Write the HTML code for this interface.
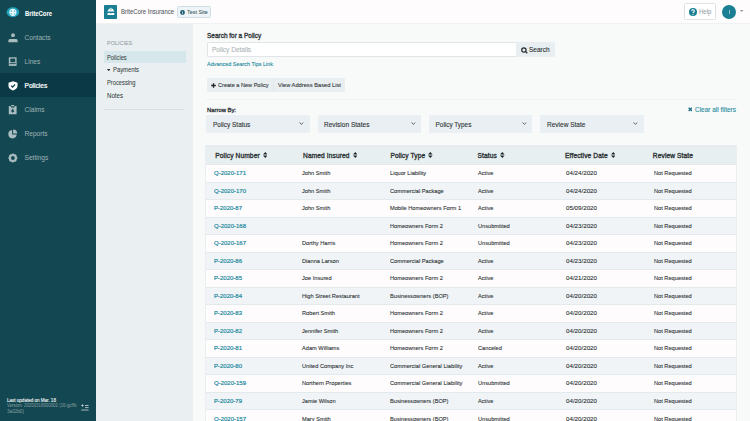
<!DOCTYPE html>
<html><head><meta charset="utf-8">
<style>
*{margin:0;padding:0;box-sizing:border-box}
html,body{width:750px;height:421px;overflow:hidden;background:#f8fafa;font-family:"Liberation Sans",sans-serif;color:#333;position:relative}
.abs{position:absolute}
.t{position:absolute;white-space:nowrap;transform-origin:0 50%}
table{position:absolute;left:206px;top:145.5px;width:530px;border-collapse:collapse;table-layout:fixed;box-shadow:0 0 0 0.7px #e4e9eb}
th{height:18.5px;background:#e8eff1;border-top:1px solid #e1e8eb;text-align:left;font-size:6.6px;font-weight:normal;-webkit-text-stroke:0.32px #2b3133;color:#2b3133;letter-spacing:0.12px;padding-left:9.6px;padding-top:0.5px;white-space:nowrap;}
td{height:17.5px;font-size:6.25px;color:#2c3234;padding-left:8px;padding-top:0px;white-space:nowrap;border-top:0.5px solid #e4e9ec;-webkit-text-stroke:0.1px #2c3234}
tr:nth-child(odd) td{background:#fefcfd}
tr:nth-child(even) td{background:#f0f4f7}
td a{color:#248a9d;text-decoration:none;-webkit-text-stroke:0.2px #248a9d}
td span.n{display:inline-block;transform:scaleX(.905);transform-origin:0 50%}
td span.d{font-size:6.2px}td a{font-size:6.0px}
td>*{position:relative;top:-0.3px}td>a{top:-0.5px}
th:nth-child(1){padding-left:9.3px}th:nth-child(2){padding-left:9px}th:nth-child(3){padding-left:8.4px}th:nth-child(4){padding-left:7.5px}th:nth-child(5){padding-left:7.1px}th:nth-child(6){padding-left:6.8px}
.sort{display:inline-block;margin-left:1.2px;vertical-align:middle;width:4.6px;height:6px;position:relative;top:-0.7px}
</style></head><body>
<div class="abs" style="left:0;top:0;width:96px;height:421px;background:#134751"></div>
<svg class="abs" style="left:5.5px;top:7px" width="14" height="11" viewBox="0 0 14 11">
<ellipse cx="6.9" cy="5.3" rx="6.3" ry="5" fill="#22a3bd"/>
<circle cx="6.9" cy="5.3" r="3.6" fill="#e9fbff"/>
<rect x="4.6" y="3.5" width="1.3" height="1.2" fill="#3aa9bf"/><rect x="7.9" y="3.5" width="1.3" height="1.2" fill="#3aa9bf"/>
<rect x="4.6" y="6.0" width="1.3" height="1.8" fill="#7cc8d6"/><rect x="7.9" y="6.0" width="1.3" height="1.8" fill="#7cc8d6"/>
</svg>
<div class="t" style="left:25.00px;top:9.79px;font-size:6.3px;line-height:7.24px;color:#fff;font-weight:bold;transform:scaleX(0.941);-webkit-text-stroke:0.05px #fff;">BriteCore</div>

<div class="abs" style="left:0;top:73px;width:96px;height:24px;background:#0b3a46"></div>
<svg class="abs" style="left:7.5px;top:32.5px" width="10" height="10" viewBox="0 0 10 10"><rect x="3.2" y="0.5" width="3.6" height="3.4" rx="1.2" fill="#a9bcbf"/><path d="M0.4 9.3V7.6C0.4 6.6 1.4 6.1 2.4 6.1H7.6C8.6 6.1 9.6 6.6 9.6 7.6V9.3z" fill="#a9bcbf"/></svg>
<div class="t" style="left:24.50px;top:33.62px;font-size:6.6px;line-height:7.59px;color:#9cb0b4;-webkit-text-stroke:0.04px #9cb0b4;">Contacts</div>

<svg class="abs" style="left:7.5px;top:56.5px" width="10" height="10" viewBox="0 0 10 10"><rect x="0.8" y="0.3" width="7.8" height="8.6" fill="#a9bcbf"/><rect x="2.4" y="1.6" width="4.8" height="3.6" fill="#134751"/><rect x="1.6" y="6.2" width="6.2" height="0.9" fill="#134751"/></svg>
<div class="t" style="left:24.50px;top:57.62px;font-size:6.6px;line-height:7.59px;color:#9cb0b4;-webkit-text-stroke:0.04px #9cb0b4;">Lines</div>

<svg class="abs" style="left:7.5px;top:80.5px" width="10" height="10" viewBox="0 0 10 10"><path d="M5 0.2L9.5 1.8v3c0 2.4-2 3.9-4.5 4.6C2.5 8.7 0.5 7.2 0.5 4.8V1.8z" fill="#fff"/><path d="M3 4.7l1.5 1.5L7.1 3.5" stroke="#0b3a46" stroke-width="1.1" fill="none"/></svg>
<div class="t" style="left:24.50px;top:81.62px;font-size:6.6px;line-height:7.59px;color:#fff;-webkit-text-stroke:0.22px #fff;">Policies</div>

<svg class="abs" style="left:7.5px;top:104.5px" width="10" height="10" viewBox="0 0 10 10"><path d="M0.8 1H3.2V0H6.2V1H8.6V9.2H0.8z" fill="#a9bcbf"/><path d="M2.3 1.3L3.3 2.4H6.1L7.1 1.3" fill="#134751"/><path d="M4.7 3.7v3.4M3.3 5.6l1.4 1.4 1.4-1.4" stroke="#134751" stroke-width="1.1" fill="none"/></svg>
<div class="t" style="left:24.50px;top:105.62px;font-size:6.6px;line-height:7.59px;color:#9cb0b4;-webkit-text-stroke:0.04px #9cb0b4;">Claims</div>

<svg class="abs" style="left:7.5px;top:128.5px" width="10" height="10" viewBox="0 0 10 10"><path d="M4.1 1A4.2 4.2 0 1 0 8.7 5.6H4.1z" fill="#a9bcbf"/><path d="M5.1 0.4v4.2h4.1A4.2 4.2 0 0 0 5.1 0.4z" fill="#a9bcbf"/></svg>
<div class="t" style="left:24.50px;top:129.62px;font-size:6.6px;line-height:7.59px;color:#9cb0b4;-webkit-text-stroke:0.04px #9cb0b4;">Reports</div>

<svg class="abs" style="left:7.5px;top:152.5px" width="10" height="10" viewBox="0 0 10 10"><circle cx="4.9" cy="5" r="3" fill="none" stroke="#a9bcbf" stroke-width="2.2"/><path d="M4.9 0.5v2M4.9 7.5v2M0.4 5h2M7.4 5h2M1.7 1.8l1.4 1.4M6.7 6.8l1.4 1.4M1.7 8.2l1.4-1.4M6.7 3.2l1.4-1.4" stroke="#a9bcbf" stroke-width="1.5"/></svg>
<div class="t" style="left:24.50px;top:153.62px;font-size:6.6px;line-height:7.59px;color:#9cb0b4;-webkit-text-stroke:0.04px #9cb0b4;">Settings</div>

<div class="t" style="left:7.00px;top:397.87px;font-size:4.9px;line-height:5.63px;color:#e3ebec;transform:scaleX(0.927);-webkit-text-stroke:0.15px #e3ebec;">Last updated on Mar. 18</div>

<div class="t" style="left:7.00px;top:403.34px;font-size:4.6px;line-height:5.29px;color:#7d979c;transform:scaleX(0.950);-webkit-text-stroke:0.05px #7d979c;">Version: 20200318000002 (16-gcffb</div>

<div class="t" style="left:7.00px;top:409.24px;font-size:4.6px;line-height:5.29px;color:#7d979c;transform:scaleX(1.007);-webkit-text-stroke:0.05px #7d979c;">3a02b0)</div>

<svg class="abs" style="left:80.5px;top:403.5px" width="8" height="7" viewBox="0 0 8 7"><path d="M0.3 1.5h2.4M1.5 0.3v2.4" stroke="#cfd9db" stroke-width="0.8"/><path d="M4 1.5h3.6M4 3.6h3.6M0.3 6h7.3" stroke="#cfd9db" stroke-width="0.8"/></svg>
<div class="abs" style="left:96px;top:0;width:654px;height:24px;background:#fefcfd;border-bottom:1px solid #eff2f2"></div>
<div class="abs" style="left:103.7px;top:4.9px;width:13.5px;height:13.7px;background:#1a7f93;border-radius:0.8px"></div>
<svg class="abs" style="left:105.5px;top:7px" width="10" height="10" viewBox="0 0 10 10"><path d="M1.5 4.6L3 1.7H6.8L8.3 4.6z" fill="#fff"/><rect x="4.4" y="0.8" width="1" height="1.2" fill="#fff"/><path d="M4.9 1.8v1.6" stroke="#1a7f93" stroke-width="0.6"/><rect x="1.5" y="6" width="6.8" height="2" fill="#fff"/><rect x="4.6" y="6" width="0.6" height="0.8" fill="#1a7f93"/></svg>
<div class="t" style="left:120.60px;top:8.17px;font-size:6.7px;line-height:7.70px;color:#4f5558;transform:scaleX(0.891);-webkit-text-stroke:0.05px #4f5558;">BriteCore Insurance</div>

<div class="abs" style="left:177px;top:6px;width:33.5px;height:11.5px;background:#eef4f7;border:0.6px solid #cfdde4;border-radius:1.5px"></div>
<svg class="abs" style="left:180.3px;top:9.6px" width="5" height="5" viewBox="0 0 5 5"><circle cx="2.5" cy="2.5" r="2.4" fill="#1c5d70"/><path d="M2.5 2.1v1.8" stroke="#fff" stroke-width="0.7"/><circle cx="2.5" cy="1.3" r="0.4" fill="#fff"/></svg>
<div class="t" style="left:187.00px;top:8.66px;font-size:6.0px;line-height:6.90px;color:#3e5560;transform:scaleX(0.900);-webkit-text-stroke:0.06px #3e5560;">Test Site</div>

<div class="abs" style="left:684.4px;top:3.4px;width:31.3px;height:16.8px;background:#fff;border:1.7px solid #dde3e5;border-radius:1.5px"></div>
<svg class="abs" style="left:688.5px;top:8px" width="8" height="8" viewBox="0 0 8 8"><circle cx="4" cy="4" r="4" fill="#1a7f93"/><path d="M2.7 3.1a1.3 1.3 0 1 1 1.9 1.1c-.45.25-.6.45-.6.9" stroke="#fff" stroke-width="1.1" fill="none"/><circle cx="4" cy="6.3" r="0.65" fill="#fff"/></svg>
<div class="t" style="left:699.00px;top:8.44px;font-size:6.4px;line-height:7.36px;color:#97a1a4;transform:scaleX(0.942);-webkit-text-stroke:0.06px #97a1a4;">Help</div>

<div class="abs" style="left:722px;top:4.8px;width:14px;height:14px;border-radius:50%;background:#1a7f93"></div>
<div class="abs" style="left:728.6px;top:9.6px;width:0.7px;height:4.4px;background:#8cc3cf"></div>
<svg class="abs" style="left:739.8px;top:10px" width="3.4" height="2" viewBox="0 0 3.4 2"><path d="M0 0H3.4L1.7 1.9z" fill="#8e9a9e"/></svg>
<div class="abs" style="left:96px;top:24px;width:97px;height:397px;background:#eaf0f2"></div>
<div class="t" style="left:106.70px;top:39.98px;font-size:5.6px;line-height:6.44px;color:#8d989c;transform:scaleX(0.979);-webkit-text-stroke:0.04px #8d989c;">POLICIES</div>

<div class="abs" style="left:104px;top:51px;width:82px;height:11.5px;background:#d6e7eb"></div>
<div class="t" style="left:107.00px;top:53.58px;font-size:6.5px;line-height:7.47px;color:#353d40;transform:scaleX(0.880);-webkit-text-stroke:0.05px #353d40;">Policies</div>

<svg class="abs" style="left:106.8px;top:68.6px" width="3.4" height="2.4" viewBox="0 0 3.4 2.4"><path d="M0 0H3.4L1.7 2.3z" fill="#2a3134"/></svg>
<div class="t" style="left:113.00px;top:65.98px;font-size:6.5px;line-height:7.47px;color:#353d40;transform:scaleX(0.900);-webkit-text-stroke:0.05px #353d40;">Payments</div>

<div class="t" style="left:107.00px;top:79.18px;font-size:6.5px;line-height:7.47px;color:#353d40;transform:scaleX(0.886);-webkit-text-stroke:0.05px #353d40;">Processing</div>

<div class="t" style="left:107.00px;top:91.88px;font-size:6.5px;line-height:7.47px;color:#353d40;transform:scaleX(0.942);-webkit-text-stroke:0.05px #353d40;">Notes</div>

<div class="abs" style="left:104px;top:109px;width:80px;height:0.6px;background:#d9dfe2"></div>
<div class="t" style="left:206.80px;top:31.56px;font-size:6.9px;line-height:7.93px;color:#2e3336;transform:scaleX(0.938);-webkit-text-stroke:0.32px #2e3336;">Search for a Policy</div>

<div class="abs" style="left:206.5px;top:42.2px;width:310px;height:15px;background:#fff;border:0.6px solid #e1e5e7;border-radius:1.5px 0 0 1.5px"></div>
<div class="t" style="left:212.10px;top:46.21px;font-size:6.8px;line-height:7.82px;color:#a9b0b3;transform:scaleX(0.958);-webkit-text-stroke:0.05px #a9b0b3;">Policy Details</div>

<div class="abs" style="left:516px;top:42px;width:39.3px;height:15.3px;background:#e9eff1;border-radius:0 1.5px 1.5px 0"></div>
<svg class="abs" style="left:521px;top:46.5px" width="7" height="7" viewBox="0 0 7 7"><circle cx="2.9" cy="2.9" r="2.15" fill="none" stroke="#262c2e" stroke-width="1.25"/><path d="M4.4 4.4L6.3 6.3" stroke="#262c2e" stroke-width="1.3"/></svg>
<div class="t" style="left:529.30px;top:46.01px;font-size:6.8px;line-height:7.82px;color:#2e3336;transform:scaleX(0.956);-webkit-text-stroke:0.12px #2e3336;">Search</div>

<div class="t" style="left:206.80px;top:60.86px;font-size:6.0px;line-height:6.90px;color:#248a9d;transform:scaleX(0.909);-webkit-text-stroke:0.12px #248a9d;">Advanced Search Tips Link</div>

<div class="abs" style="left:206.7px;top:78px;width:66px;height:13.6px;background:#e9eff1;border-radius:1.5px 0 0 1.5px"></div>
<div class="abs" style="left:272.7px;top:78px;width:72.5px;height:13.6px;background:#e9eff1;border-left:0.6px solid #e2e8ea;border-radius:0 1.5px 1.5px 0"></div>
<svg class="abs" style="left:211px;top:82.6px" width="5" height="5" viewBox="0 0 5 5"><path d="M2.5 0.2v4.6M0.2 2.5h4.6" stroke="#1f2527" stroke-width="1.3"/></svg>
<div class="t" style="left:218.10px;top:81.45px;font-size:6.2px;line-height:7.13px;color:#2e3336;transform:scaleX(0.901);-webkit-text-stroke:0.1px #2e3336;">Create a New Policy</div>

<div class="t" style="left:277.70px;top:81.45px;font-size:6.2px;line-height:7.13px;color:#2e3336;transform:scaleX(0.925);-webkit-text-stroke:0.1px #2e3336;">View Address Based List</div>

<div class="abs" style="left:206px;top:98.5px;width:530px;height:0.6px;background:#f0f3f4"></div>
<div class="t" style="left:207.00px;top:106.96px;font-size:6.0px;line-height:6.90px;color:#2e3336;transform:scaleX(0.977);-webkit-text-stroke:0.3px #2e3336;">Narrow By:</div>

<svg class="abs" style="left:687.8px;top:107px" width="4.6" height="4.6" viewBox="0 0 4.6 4.6"><path d="M0.7 0.7L3.9 3.9M3.9 0.7L0.7 3.9" stroke="#1d7087" stroke-width="1.4"/></svg>
<div class="t" style="left:695.00px;top:105.62px;font-size:6.6px;line-height:7.59px;color:#248a9d;transform:scaleX(0.981);-webkit-text-stroke:0.1px #248a9d;">Clear all filters</div>

<div class="abs" style="left:206px;top:115px;width:103.5px;height:18px;background:#e9eff2;border-radius:1.5px"></div>
<div class="t" style="left:212.80px;top:120.64px;font-size:6.4px;line-height:7.36px;color:#2e3336;transform:scaleX(1.011);-webkit-text-stroke:0.1px #2e3336;">Policy Status</div>

<svg class="abs" style="left:299.2px;top:122px" width="4.8" height="2.8" viewBox="0 0 4.8 2.8"><path d="M0.5 0.5L2.4 2.3L4.3 0.5" stroke="#3b4244" stroke-width="0.8" fill="none"/></svg>
<div class="abs" style="left:317.6px;top:115px;width:103.5px;height:18px;background:#e9eff2;border-radius:1.5px"></div>
<div class="t" style="left:324.40px;top:120.64px;font-size:6.4px;line-height:7.36px;color:#2e3336;transform:scaleX(1.023);-webkit-text-stroke:0.1px #2e3336;">Revision States</div>

<svg class="abs" style="left:410.8px;top:122px" width="4.8" height="2.8" viewBox="0 0 4.8 2.8"><path d="M0.5 0.5L2.4 2.3L4.3 0.5" stroke="#3b4244" stroke-width="0.8" fill="none"/></svg>
<div class="abs" style="left:428.8px;top:115px;width:103.5px;height:18px;background:#e9eff2;border-radius:1.5px"></div>
<div class="t" style="left:435.60px;top:120.64px;font-size:6.4px;line-height:7.36px;color:#2e3336;-webkit-text-stroke:0.1px #2e3336;">Policy Types</div>

<svg class="abs" style="left:522.0px;top:122px" width="4.8" height="2.8" viewBox="0 0 4.8 2.8"><path d="M0.5 0.5L2.4 2.3L4.3 0.5" stroke="#3b4244" stroke-width="0.8" fill="none"/></svg>
<div class="abs" style="left:540.1px;top:115px;width:103.5px;height:18px;background:#e9eff2;border-radius:1.5px"></div>
<div class="t" style="left:546.90px;top:120.64px;font-size:6.4px;line-height:7.36px;color:#2e3336;transform:scaleX(1.018);-webkit-text-stroke:0.1px #2e3336;">Review State</div>

<svg class="abs" style="left:633.3000000000001px;top:122px" width="4.8" height="2.8" viewBox="0 0 4.8 2.8"><path d="M0.5 0.5L2.4 2.3L4.3 0.5" stroke="#3b4244" stroke-width="0.8" fill="none"/></svg>
<table><colgroup><col style="width:88px"><col style="width:88px"><col style="width:88px"><col style="width:88px"><col style="width:88px"><col></colgroup>
<thead><tr><th>Policy Number <svg class="sort" viewBox="0 0 4.6 6"><path d="M2.3 0L4.6 2.6H0zM2.3 6L4.6 3.4H0z" fill="#1f2628"/></svg></th><th>Named Insured <svg class="sort" viewBox="0 0 4.6 6"><path d="M2.3 0L4.6 2.6H0zM2.3 6L4.6 3.4H0z" fill="#1f2628"/></svg></th><th>Policy Type <svg class="sort" viewBox="0 0 4.6 6"><path d="M2.3 0L4.6 2.6H0zM2.3 6L4.6 3.4H0z" fill="#1f2628"/></svg></th><th>Status <svg class="sort" viewBox="0 0 4.6 6"><path d="M2.3 0L4.6 2.6H0zM2.3 6L4.6 3.4H0z" fill="#1f2628"/></svg></th><th>Effective Date <svg class="sort" viewBox="0 0 4.6 6"><path d="M2.3 0L4.6 2.6H0zM2.3 6L4.6 3.4H0z" fill="#1f2628"/></svg></th><th>Review State</th></tr></thead>
<tbody>
<tr><td><a>Q-2020-171</a></td><td><span class="n">John Smith</span></td><td><span class="n">Liquor Liability</span></td><td><span class="n">Active</span></td><td><span class="d">04/24/2020</span></td><td><span class="n">Not Requested</span></td></tr>
<tr><td><a>Q-2020-170</a></td><td><span class="n">John Smith</span></td><td><span class="n">Commercial Package</span></td><td><span class="n">Active</span></td><td><span class="d">04/24/2020</span></td><td><span class="n">Not Requested</span></td></tr>
<tr><td><a>P-2020-87</a></td><td><span class="n">John Smith</span></td><td><span class="n">Mobile Homeowners Form 1</span></td><td><span class="n">Active</span></td><td><span class="d">05/09/2020</span></td><td><span class="n">Not Requested</span></td></tr>
<tr><td><a>Q-2020-168</a></td><td></td><td><span class="n">Homeowners Form 2</span></td><td><span class="n">Unsubmitted</span></td><td><span class="d">04/23/2020</span></td><td><span class="n">Not Requested</span></td></tr>
<tr><td><a>Q-2020-167</a></td><td><span class="n">Dorthy Harris</span></td><td><span class="n">Homeowners Form 2</span></td><td><span class="n">Unsubmitted</span></td><td><span class="d">04/23/2020</span></td><td><span class="n">Not Requested</span></td></tr>
<tr><td><a>P-2020-86</a></td><td><span class="n">Dianna Larson</span></td><td><span class="n">Commercial Package</span></td><td><span class="n">Active</span></td><td><span class="d">04/23/2020</span></td><td><span class="n">Not Requested</span></td></tr>
<tr><td><a>P-2020-85</a></td><td><span class="n">Joe Insured</span></td><td><span class="n">Homeowners Form 2</span></td><td><span class="n">Active</span></td><td><span class="d">04/21/2020</span></td><td><span class="n">Not Requested</span></td></tr>
<tr><td><a>P-2020-84</a></td><td><span class="n">High Street Restaurant</span></td><td><span class="n">Businessowners (BOP)</span></td><td><span class="n">Active</span></td><td><span class="d">04/20/2020</span></td><td><span class="n">Not Requested</span></td></tr>
<tr><td><a>P-2020-83</a></td><td><span class="n">Robert Smith</span></td><td><span class="n">Homeowners Form 2</span></td><td><span class="n">Active</span></td><td><span class="d">04/20/2020</span></td><td><span class="n">Not Requested</span></td></tr>
<tr><td><a>P-2020-82</a></td><td><span class="n">Jennifer Smith</span></td><td><span class="n">Homeowners Form 2</span></td><td><span class="n">Active</span></td><td><span class="d">04/20/2020</span></td><td><span class="n">Not Requested</span></td></tr>
<tr><td><a>P-2020-81</a></td><td><span class="n">Adam Williams</span></td><td><span class="n">Homeowners Form 2</span></td><td><span class="n">Canceled</span></td><td><span class="d">04/20/2020</span></td><td><span class="n">Not Requested</span></td></tr>
<tr><td><a>P-2020-80</a></td><td><span class="n">United Company Inc</span></td><td><span class="n">Commercial General Liability</span></td><td><span class="n">Active</span></td><td><span class="d">04/20/2020</span></td><td><span class="n">Not Requested</span></td></tr>
<tr><td><a>Q-2020-159</a></td><td><span class="n">Northern Properties</span></td><td><span class="n">Commercial General Liability</span></td><td><span class="n">Unsubmitted</span></td><td><span class="d">04/20/2020</span></td><td><span class="n">Not Requested</span></td></tr>
<tr><td><a>P-2020-79</a></td><td><span class="n">Jamie Wilson</span></td><td><span class="n">Businessowners (BOP)</span></td><td><span class="n">Active</span></td><td><span class="d">04/20/2020</span></td><td><span class="n">Not Requested</span></td></tr>
<tr><td><a>Q-2020-157</a></td><td><span class="n">Mary Smith</span></td><td><span class="n">Businessowners (BOP)</span></td><td><span class="n">Unsubmitted</span></td><td><span class="d">04/20/2020</span></td><td><span class="n">Not Requested</span></td></tr>
</tbody></table>
</body></html>
